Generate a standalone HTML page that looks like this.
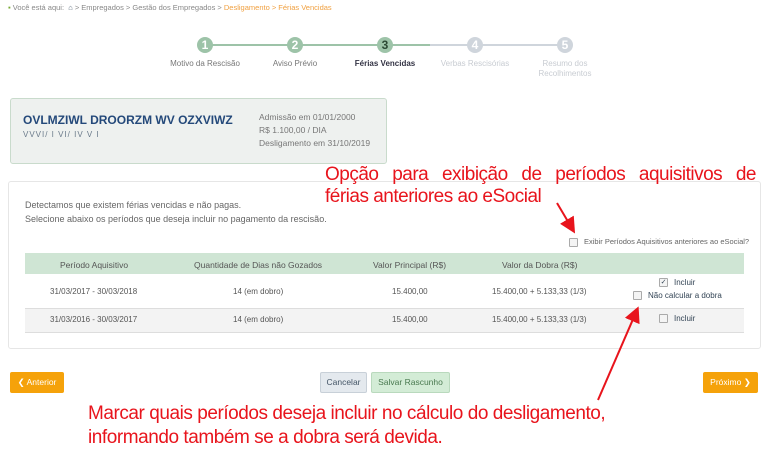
<!DOCTYPE html>
<html><head><meta charset="utf-8"><style>
body{margin:0;width:768px;height:451px;background:#fff;font-family:"Liberation Sans",sans-serif;position:relative;overflow:hidden;color:#555}
.a{position:absolute;white-space:nowrap}
.c{position:absolute;width:16px;height:16px;border-radius:50%;color:#fff;font-weight:bold;font-size:12px;text-align:center;line-height:16px}
.sl{position:absolute;font-size:8px;text-align:center;width:90px}
.cb{display:inline-block;width:7px;height:7px;border:1px solid #aaa;background:#f4f4f4;border-radius:1px;vertical-align:middle;margin-right:6px}
.btn{position:absolute;height:21px;font-size:8.5px;line-height:21px;text-align:center;border-radius:2px}
.red{color:#e8141c;font-size:19px;position:absolute;white-space:nowrap;letter-spacing:-0.5px}
</style></head><body>
<div class="a" style="left:8px;top:3px;font-size:7.5px;color:#888"><span style="color:#7a3">▪</span> Você está aqui: &nbsp;<span style="color:#567">⌂</span> &gt; Empregados &gt; Gestão dos Empregados &gt; <span style="color:#f0a040">Desligamento &gt; Férias Vencidas</span></div>
<div class="a" style="left:205px;top:44px;width:225px;height:2px;background:#9dc3a8"></div>
<div class="a" style="left:430px;top:44px;width:135px;height:2px;background:#cfd5dc"></div>
<div class="c" style="left:197px;top:37px;background:#9dc3a8">1</div>
<div class="c" style="left:287px;top:37px;background:#9dc3a8">2</div>
<div class="c" style="left:377px;top:37px;background:#9dc3a8;color:#2d4a35">3</div>
<div class="c" style="left:467px;top:37px;background:#cfd5dc">4</div>
<div class="c" style="left:557px;top:37px;background:#cfd5dc">5</div>
<div class="sl" style="left:160px;top:59px;color:#777">Motivo da Rescisão</div>
<div class="sl" style="left:250px;top:59px;color:#777">Aviso Prévio</div>
<div class="sl" style="left:340px;top:59px;color:#334;font-weight:bold">Férias Vencidas</div>
<div class="sl" style="left:430px;top:59px;color:#c8ccd2">Verbas Rescisórias</div>
<div class="sl" style="left:520px;top:59px;color:#c8ccd2;line-height:10px">Resumo dos<br>Recolhimentos</div>

<div class="a" style="left:10px;top:98px;width:375px;height:64px;background:#eef1ef;border:1px solid #c9dbcc;border-radius:3px"></div>
<div class="a" style="left:23px;top:113px;font-size:12px;color:#24497a;font-weight:bold">OVLMZIWL DROORZM WV OZXVIWZ</div>
<div class="a" style="left:23px;top:130px;font-size:8px;color:#6a7a8a;letter-spacing:1px">VVVI/ I VI/ IV V I</div>
<div class="a" style="left:259px;top:111px;font-size:8.5px;color:#777;line-height:13px">Admissão em 01/01/2000<br>R$ 1.100,00 / DIA<br>Desligamento em 31/10/2019</div>

<div class="a" style="left:8px;top:181px;width:751px;height:166px;border:1px solid #e6e6e6;border-radius:3px"></div>
<div class="a" style="left:25px;top:198px;font-size:9px;color:#666;line-height:14px">Detectamos que existem férias vencidas e não pagas.<br>Selecione abaixo os períodos que deseja incluir no pagamento da rescisão.</div>
<div class="a" style="left:569px;top:237px;font-size:7.5px;color:#666"><span class="cb"></span>Exibir Períodos Aquisitivos anteriores ao eSocial?</div>
<div class="a" style="left:25px;top:253px;width:719px;height:21px;background:#cfe5d4"></div>
<div class="a" style="left:25px;top:308px;width:719px;height:23px;background:#f3f3f3;border-top:1px solid #ddd;border-bottom:1px solid #ddd"></div>
<div class="a" style="font-size:8.5px;color:#555;top:260px;left:60px">Período Aquisitivo</div>
<div class="a" style="font-size:8.5px;color:#555;top:260px;left:194px">Quantidade de Dias não Gozados</div>
<div class="a" style="font-size:8.5px;color:#555;top:260px;left:373px">Valor Principal (R$)</div>
<div class="a" style="font-size:8.5px;color:#555;top:260px;left:502px">Valor da Dobra (R$)</div>
<div class="a" style="font-size:8px;top:287px;left:50px">31/03/2017 - 30/03/2018</div>
<div class="a" style="font-size:8px;top:287px;left:233px">14 (em dobro)</div>
<div class="a" style="font-size:8px;top:287px;left:392px">15.400,00</div>
<div class="a" style="font-size:8px;top:287px;left:492px">15.400,00 + 5.133,33 (1/3)</div>
<div class="a" style="font-size:8px;top:278px;left:659px;color:#345"><span class="cb" style="text-align:center;line-height:7px;font-size:7px">✓</span>Incluir</div>
<div class="a" style="font-size:8px;top:291px;left:633px;color:#345"><span class="cb"></span>Não calcular a dobra</div>
<div class="a" style="font-size:8px;top:315px;left:50px">31/03/2016 - 30/03/2017</div>
<div class="a" style="font-size:8px;top:315px;left:233px">14 (em dobro)</div>
<div class="a" style="font-size:8px;top:315px;left:392px">15.400,00</div>
<div class="a" style="font-size:8px;top:315px;left:492px">15.400,00 + 5.133,33 (1/3)</div>
<div class="a" style="font-size:8px;top:314px;left:659px;color:#345"><span class="cb"></span>Incluir</div>

<div class="btn" style="left:10px;top:372px;width:54px;background:#f5a20a;color:#fff">❮ Anterior</div>
<div class="btn" style="left:320px;top:372px;width:45px;background:#e4e9ee;border:1px solid #c8d0d8;height:19px;line-height:19px;color:#456">Cancelar</div>
<div class="btn" style="left:371px;top:372px;width:77px;background:#d3ecd6;border:1px solid #b9d9bd;height:19px;line-height:19px;color:#4a7a50">Salvar Rascunho</div>
<div class="btn" style="left:703px;top:372px;width:55px;background:#f5a20a;color:#fff">Próximo ❯</div>

<div class="red" style="left:325px;top:164px;width:431px;text-align:justify;text-align-last:justify;white-space:normal">Opção para exibição de períodos aquisitivos de</div>
<div class="red" style="left:325px;top:186px">férias anteriores ao eSocial</div>
<div class="red" style="left:88px;top:403px;letter-spacing:-0.45px">Marcar quais períodos deseja incluir no cálculo do desligamento,</div>
<div class="red" style="left:88px;top:427px;letter-spacing:-0.45px">informando também se a dobra será devida.</div>
<svg class="a" style="left:0;top:0" width="768" height="451">
<defs><marker id="m" markerWidth="8" markerHeight="8" refX="6" refY="4" orient="auto"><path d="M0,0 L8,4 L0,8 z" fill="#e8141c"/></marker></defs>
<line x1="557" y1="203" x2="573" y2="230" stroke="#e8141c" stroke-width="2" marker-end="url(#m)"/>
<line x1="598" y1="400" x2="637" y2="310" stroke="#e8141c" stroke-width="2" marker-end="url(#m)"/>
</svg>
</body></html>
